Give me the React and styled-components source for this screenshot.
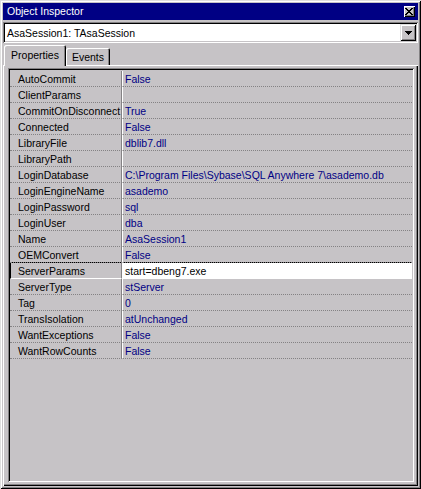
import React from "react";
import styled, { createGlobalStyle } from "styled-components";

const GlobalStyle = createGlobalStyle`
  html, body {
    margin: 0;
    padding: 0;
    background: #c6c3c6;
  }
  body {
    font-family: "Liberation Sans", Arial, sans-serif;
    font-size: 10.5px;
  }
`;

const Window = styled.div`
  box-sizing: border-box;
  width: 421px;
  height: 489px;
  padding: 3px;
  background: #c6c3c6;
  box-shadow: inset 1px 1px #dfdfdf, inset -1px -1px #000,
    inset 2px 2px #fff, inset -2px -2px #848284;
  display: flex;
  flex-direction: column;
`;

const TitleBar = styled.div`
  height: 17px;
  background: #000084;
  color: #fff;
  display: flex;
  align-items: center;
  justify-content: space-between;
  padding: 0 3px 0 4px;
  line-height: 17px;
`;

const CloseButton = styled.div`
  box-sizing: border-box;
  width: 11px;
  height: 11px;
  background: #c6c3c6;
  box-shadow: inset 1px 1px #fff, inset -1px -1px #000, inset -2px -2px #848284;
  display: flex;
  align-items: center;
  justify-content: center;
  padding: 0 1px 1px 0;
`;

const Combo = styled.div`
  box-sizing: border-box;
  margin-top: 2px;
  height: 21px;
  padding: 2px;
  background: #fff;
  box-shadow: inset 1px 1px #848284, inset -1px -1px #fff,
    inset 2px 2px #000, inset -2px -2px #c6c3c6;
  display: flex;
  align-items: center;
`;

const ComboText = styled.span`
  flex: 1;
  padding-left: 2px;
  color: #000;
`;

const DropButton = styled.div`
  box-sizing: border-box;
  width: 16px;
  height: 17px;
  background: #c6c3c6;
  box-shadow: inset 1px 1px #dfdfdf, inset -1px -1px #000,
    inset 2px 2px #fff, inset -2px -2px #848284;
  display: flex;
  align-items: center;
  justify-content: center;
`;

const TabRow = styled.div`
  position: relative;
  z-index: 1;
  height: 23px;
  margin-bottom: -1px;
  padding-left: 1px;
  display: flex;
  align-items: flex-end;
`;

const Tab = styled.div`
  box-sizing: border-box;
  width: ${(p) => p.$width}px;
  height: ${(p) => (p.$active ? 21 : 17)}px;
  margin-bottom: ${(p) => (p.$active ? 0 : 1)}px;
  padding-top: ${(p) => (p.$active ? 4 : 3)}px;
  background: #c6c3c6;
  border-top-left-radius: 2px;
  border-top-right-radius: 2px;
  box-shadow: inset 1px 1px #fff, inset -1px 0 #000, inset -2px 0 #848284;
  text-align: center;
  color: #000;
  line-height: 13px;
`;

const Panel = styled.div`
  box-sizing: border-box;
  flex: 1;
  padding: 3px 4px 4px 5px;
  background: #c6c3c6;
  box-shadow: inset 1px 1px #fff, inset -1px -1px #000, inset -2px -2px #848284;
  display: flex;
  flex-direction: column;
`;

const Grid = styled.div`
  box-sizing: border-box;
  flex: 1;
  padding: 3px 2px 2px 2px;
  box-shadow: inset 1px 1px #848284, inset -1px -1px #fff,
    inset 2px 2px #000, inset -2px -2px #c6c3c6;
`;

const Row = styled.div`
  display: grid;
  grid-template-columns: 112px 1fr;
  ${(p) =>
    p.$selected &&
    `
    margin-top: -1px;
    border-top: 1px solid #000;
  `}
`;

const NameCell = styled.div`
  box-sizing: border-box;
  height: 16px;
  line-height: 16px;
  padding-left: ${(p) => (p.$selected ? 7 : 8)}px;
  border-left: ${(p) => (p.$selected ? "1px solid #000" : "none")};
  border-right: 1px solid #848284;
  border-bottom: 1px ${(p) => (p.$selected ? "solid #fff" : "dotted #848284")};
  color: #000;
  white-space: nowrap;
  overflow: hidden;
`;

const ValueCell = styled.div`
  box-sizing: border-box;
  height: 16px;
  line-height: 16px;
  padding-left: 2px;
  border-left: 1px solid #fff;
  border-bottom: 1px ${(p) => (p.$selected ? "solid #fff" : "dotted #848284")};
  background: ${(p) => (p.$selected ? "#fff" : "transparent")};
  color: ${(p) => (p.$selected ? "#000" : "#000084")};
  white-space: nowrap;
  overflow: hidden;
`;

const CloseGlyph = () => (
  <svg width="8" height="7" viewBox="0 0 8 7" shapeRendering="crispEdges">
    <path
      fill="#000"
      d="M0 0h2v1H0z M6 0h2v1H6z M1 1h2v1H1z M5 1h2v1H5z M2 2h4v1H2z M3 3h2v1H3z M2 4h4v1H2z M1 5h2v1H1z M5 5h2v1H5z M0 6h2v1H0z M6 6h2v1H6z"
    />
  </svg>
);

const ArrowGlyph = () => (
  <svg width="7" height="4" viewBox="0 0 7 4" shapeRendering="crispEdges">
    <path fill="#000" d="M0 0h7v1H0z M1 1h5v1H1z M2 2h3v1H2z M3 3h1v1H3z" />
  </svg>
);

const props = [
  ["AutoCommit", "False"],
  ["ClientParams", ""],
  ["CommitOnDisconnect", "True"],
  ["Connected", "False"],
  ["LibraryFile", "dblib7.dll"],
  ["LibraryPath", ""],
  ["LoginDatabase", "C:\\Program Files\\Sybase\\SQL Anywhere 7\\asademo.db"],
  ["LoginEngineName", "asademo"],
  ["LoginPassword", "sql"],
  ["LoginUser", "dba"],
  ["Name", "AsaSession1"],
  ["OEMConvert", "False"],
  ["ServerParams", "start=dbeng7.exe"],
  ["ServerType", "stServer"],
  ["Tag", "0"],
  ["TransIsolation", "atUnchanged"],
  ["WantExceptions", "False"],
  ["WantRowCounts", "False"],
];

const selectedName = "ServerParams";

export default function App() {
  return (
    <>
      <GlobalStyle />
      <Window>
        <TitleBar>
          <span>Object Inspector</span>
          <CloseButton>
            <CloseGlyph />
          </CloseButton>
        </TitleBar>
        <Combo>
          <ComboText>AsaSession1: TAsaSession</ComboText>
          <DropButton>
            <ArrowGlyph />
          </DropButton>
        </Combo>
        <TabRow>
          <Tab $active $width={62}>Properties</Tab>
          <Tab $width={44}>Events</Tab>
        </TabRow>
        <Panel>
          <Grid>
            {props.map(([name, value]) => {
              const sel = name === selectedName;
              return (
                <Row key={name} $selected={sel}>
                  <NameCell $selected={sel}>{name}</NameCell>
                  <ValueCell $selected={sel}>{value}</ValueCell>
                </Row>
              );
            })}
          </Grid>
        </Panel>
      </Window>
    </>
  );
}
